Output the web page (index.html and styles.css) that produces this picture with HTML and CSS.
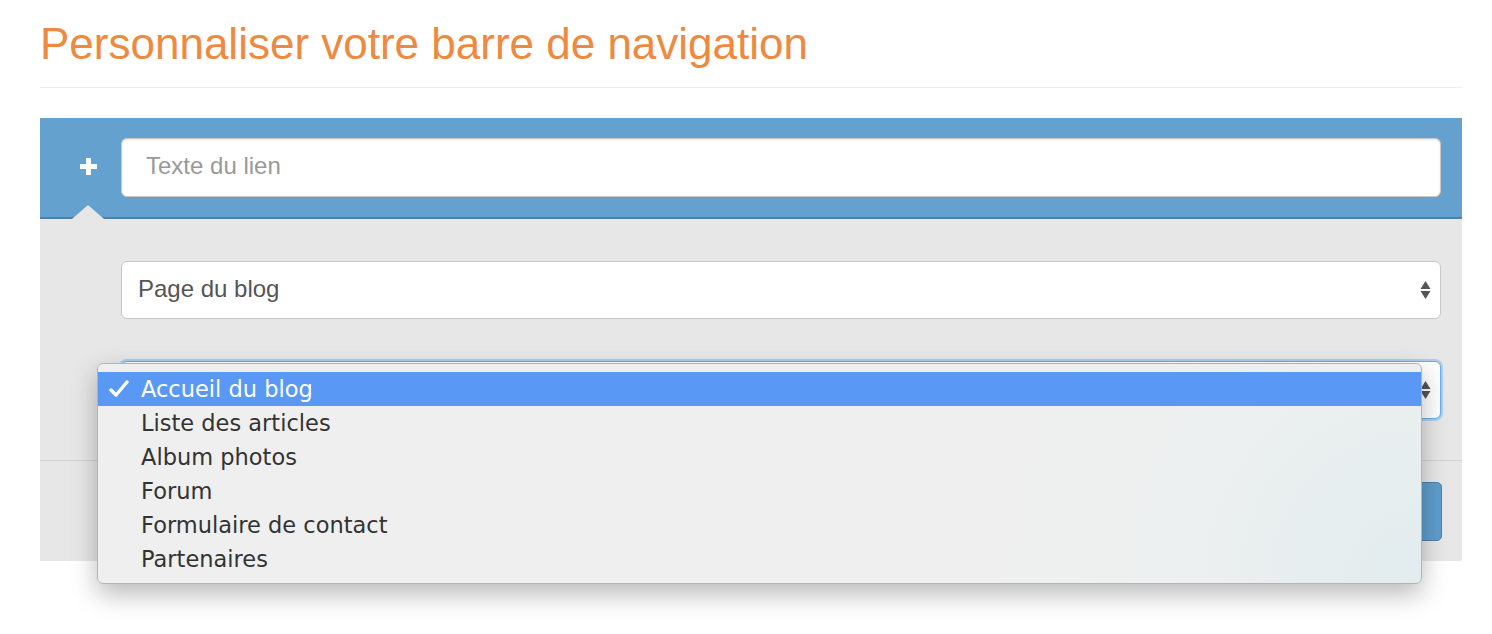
FILE: index.html
```html
<!DOCTYPE html>
<html lang="fr">
<head>
    <meta charset="UTF-8">
    <meta name="viewport" content="width=device-width, initial-scale=1.0">
    <title>Personnaliser votre barre de navigation</title>
    <link rel="stylesheet" href="styles.css">
</head>
<body>
    <h1>Personnaliser votre barre de navigation</h1>
    <hr>

    <div class="link-panel">
        <div class="add">
            <svg width="17" height="17" viewBox="0 0 17 17"><path d="M6 0h5v6h6v5h-6v6H6v-6H0V6h6z" fill="#fff"/></svg>
        </div>
        <input type="text" class="form-control" placeholder="Texte du lien">
        <span class="arrow"></span>
    </div>

    <div class="link-options">
        <div class="select">
            <span>Page du blog</span>
            <svg class="updown" width="11" height="20" viewBox="0 0 11 20"><path d="M5.5 1L10.5 9H0.5z M5.5 19L10.5 11H0.5z" fill="#555"/></svg>
        </div>
        <div class="select focused">
            <span></span>
            <svg class="updown" width="11" height="20" viewBox="0 0 11 20"><path d="M5.5 1L10.5 9H0.5z M5.5 19L10.5 11H0.5z" fill="#555"/></svg>

            <ul class="dropdown">
                <li class="selected">
                    <svg class="check" width="20" height="18" viewBox="0 0 20 18"><path d="M2 10l5 5L18 2" fill="none" stroke="#fff" stroke-width="3.4" stroke-linecap="round" stroke-linejoin="round"/></svg>
                    Accueil du blog
                </li>
                <li>Liste des articles</li>
                <li>Album photos</li>
                <li>Forum</li>
                <li>Formulaire de contact</li>
                <li>Partenaires</li>
            </ul>
        </div>
    </div>

    <div class="link-footer">
        <button>Ajouter</button>
    </div>
</body>
</html>
```

FILE: styles.css
```css
html, body {
    min-height: 634px;
}
body {
    margin: 0;
    padding: 0 30px 0 40px;
    font-family: "Liberation Sans", Arial, sans-serif;
    background: #fff;
}
h1 {
    margin: 20px 0 0;
    font-size: 44px;
    line-height: 48px;
    font-weight: normal;
    color: #ee8a40;
}
hr {
    margin: 19px 0 30px;
    border: 0;
    border-top: 1px solid #eee;
}
.link-panel {
    position: relative;
    display: flex;
    align-items: center;
    padding: 20px 21px 20px 0;
    background: #64a1cf;
    border-bottom: 2px solid #4d80a8;
}
.add {
    width: 81px;
    display: flex;
    justify-content: flex-end;
    padding: 0 24px 3px 0;
    box-sizing: border-box;
}
.add svg {
    display: block;
}
.arrow {
    position: absolute;
    left: 32px;
    bottom: -2px;
    border-left: 16px solid transparent;
    border-right: 16px solid transparent;
    border-bottom: 14px solid #e7e7e7;
}
.form-control {
    flex: 1;
    height: 59px;
    box-sizing: border-box;
    border: 1px solid #c8c8c8;
    border-radius: 6px;
    padding: 0 24px 3px;
    font-family: "Liberation Sans", Arial, sans-serif;
    font-size: 24px;
    color: #555;
    box-shadow: inset 0 1px 2px rgba(0, 0, 0, .1);
    outline: none;
}
.form-control::placeholder {
    color: #999;
}
.link-options {
    display: flex;
    flex-direction: column;
    gap: 42px;
    padding: 42px 21px 41px 81px;
    background: #e7e7e7;
}
.select {
    position: relative;
    height: 58px;
    box-sizing: border-box;
    display: flex;
    align-items: center;
    justify-content: space-between;
    padding: 0 9px 3px 16px;
    background: #fff;
    border: 1px solid #c8c8c8;
    border-radius: 6px;
    font-size: 24px;
    color: #555;
}
.select.focused {
    border-color: #66afe9;
    box-shadow: 0 0 0 2px rgba(102, 175, 233, .45);
}
.updown {
    display: block;
    margin-top: 3px;
}
.dropdown {
    position: absolute;
    z-index: 10;
    left: -25px;
    top: 1px;
    width: 1325px;
    box-sizing: border-box;
    margin: 0;
    padding: 8px 0 7px;
    list-style: none;
    border: 1px solid #b4b4b4;
    border-radius: 6px;
    background: radial-gradient(circle at 100% 100%, #e2ecee 0, #edf0f0 260px, #efefef 420px);
    box-shadow: 0 10px 26px rgba(0, 0, 0, .28);
    font-family: "DejaVu Sans", sans-serif;
    font-size: 22.5px;
    color: #333;
}
.dropdown li {
    position: relative;
    height: 34px;
    line-height: 34px;
    padding-left: 43px;
}
.dropdown li.selected {
    background: #5a98f5;
    color: #fff;
}
.check {
    position: absolute;
    left: 11px;
    top: 8px;
}
.link-footer {
    display: flex;
    justify-content: flex-end;
    padding: 21px 20px 20px;
    background: #e7e7e7;
    border-top: 1px solid #d3d3d3;
}
button {
    height: 59px;
    padding: 0 30px;
    background: #5f9dcc;
    color: #fff;
    border: 1px solid #4a7fa9;
    border-radius: 5px;
    font-family: "Liberation Sans", Arial, sans-serif;
    font-size: 24px;
}
```
